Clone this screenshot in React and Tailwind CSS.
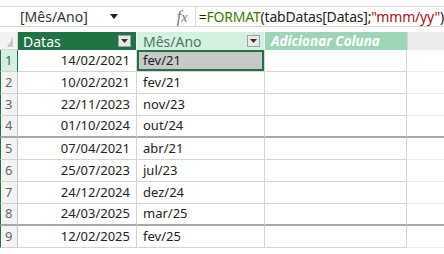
import React from 'react';

const rows = [
  { n: 1, data: '14/02/2021', mes: 'fev/21' },
  { n: 2, data: '10/02/2021', mes: 'fev/21' },
  { n: 3, data: '22/11/2023', mes: 'nov/23' },
  { n: 4, data: '01/10/2024', mes: 'out/24', sep: true },
  { n: 5, data: '07/04/2021', mes: 'abr/21' },
  { n: 6, data: '25/07/2023', mes: 'jul/23' },
  { n: 7, data: '24/12/2024', mes: 'dez/24' },
  { n: 8, data: '24/03/2025', mes: 'mar/25', sep: true },
  { n: 9, data: '12/02/2025', mes: 'fev/25' },
];

const FilterButton = () => (
  <div className="w-[13px] h-[12px] bg-[#e8e8e8] border border-[#a0a0a0] flex items-center justify-center">
    <svg width="7" height="4" viewBox="0 0 7 4">
      <path d="M0 0h7L3.5 4z" fill="#333" />
    </svg>
  </div>
);

const App = () => {
  return (
    <div className="w-[444px] h-[254px] bg-white overflow-hidden font-['Noto_Sans',sans-serif] text-[13px] text-[#222]">
      {/* formula bar */}
      <div className="h-[6px] bg-white" />
      <div className="h-[21px] border-y border-[#d6d6d6] flex items-center">
        <div className="w-[178px] flex items-center pl-[20px]">
          <span className="text-[14px] text-[#333] w-[90px]">[Mês/Ano]</span>
          <svg width="8" height="5" viewBox="0 0 8 5">
            <path d="M0 0h8L4 5z" fill="#222" />
          </svg>
        </div>
        <div className="w-[19px] h-full border-r border-[#d6d6d6] flex items-center">
          <span className="font-['Liberation_Serif',serif] italic text-[16px] text-[#777] leading-none">f<span className="text-[14px]">x</span></span>
        </div>
        <div className="pl-[3px] text-[14px] whitespace-nowrap tracking-[-0.2px]">
          <span>=</span>
          <span className="text-[#3a7d00]">FORMAT</span>
          <span>(tabDatas[Datas];</span>
          <span className="text-[#a31515]">"mmm/yy"</span>
          <span>)</span>
        </div>
      </div>
      <div className="h-[5px] bg-white" />

      {/* grid */}
      <div className="grid grid-cols-[18px_119px_128px_142px_1fr]">
        {/* header row */}
        <div className="h-[18px] bg-[#f3f3f3] border-r border-b border-[#d4d4d4] flex items-end justify-end pr-[4px] pb-[2px]">
          <svg width="6" height="10" viewBox="0 0 6 10">
            <path d="M6 0V10H0z" fill="#c8c8c8" />
          </svg>
        </div>
        <div className="h-[18px] bg-[#217346] text-white text-[14px] flex items-center justify-between pl-[5px] pr-[5px] border-r border-[#f0f0f0]">
          <span>Datas</span>
          <FilterButton />
        </div>
        <div className="h-[18px] bg-[#d3f0e0] text-[#4d7a5e] text-[14px] flex items-center justify-between pl-[6px] pr-[4px] border-r border-[#f0f0f0]">
          <span>Mês/Ano</span>
          <FilterButton />
        </div>
        <div className="h-[18px] bg-[#9fd5b7] text-white text-[13.5px] font-bold italic flex items-center pl-[6px]">
          Adicionar Coluna
        </div>
        <div className="h-[18px] bg-[#ebebeb] border-l border-[#d4d4d4]" />

        {rows.map((r) => {
          const b = r.sep ? 'border-b-2 border-b-[#a8a8a8]' : 'border-b border-b-[#d4d4d4]';
          const first = r.n === 1;
          return (
            <React.Fragment key={r.n}>
              <div
                className={`h-[22px] flex items-center pl-[4px] border-l border-l-[#217346] border-r ${b} ${
                  first ? 'bg-[#d3f0e0] text-[#217346] border-r-[#217346]' : 'bg-[#f3f3f3] text-[#666] border-r-[#c8c8c8]'
                }`}
              >
                {r.n}
              </div>
              <div className={`h-[22px] flex items-center justify-end pr-[6px] border-r border-r-[#d4d4d4] ${b}`}>
                {r.data}
              </div>
              <div className={`h-[22px] flex items-center border-r border-r-[#d4d4d4] ${b}`}>
                {first ? (
                  <div className="w-full h-full bg-[#c8c8c8] border-2 border-[#217346] flex items-center pl-[4px]">{r.mes}</div>
                ) : (
                  <span className="pl-[6px]">{r.mes}</span>
                )}
              </div>
              <div className={`h-[22px] border-r border-r-[#d4d4d4] ${b}`} />
              <div className={`h-[22px] ${r.sep ? 'border-b-2 border-b-[#a8a8a8]' : 'border-b border-b-[#ededed]'}`} />
            </React.Fragment>
          );
        })}
      </div>
    </div>
  );
};

export default App;
